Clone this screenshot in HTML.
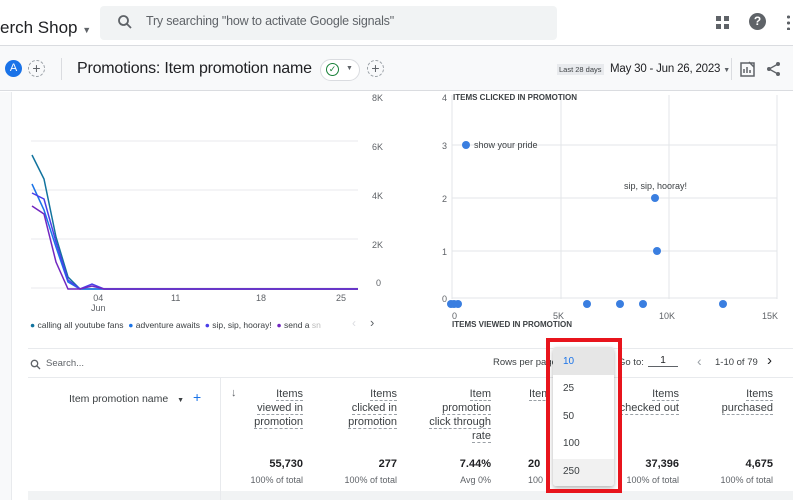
<!DOCTYPE html>
<html><head><meta charset="utf-8"><style>
*{box-sizing:border-box;margin:0;padding:0}
body{width:793px;height:500px;overflow:hidden;background:#fff;font-family:"Liberation Sans",Arial,sans-serif;color:#202124;position:relative}
.a{position:absolute;white-space:nowrap}
.hd{font-size:11px;color:#3c4043;line-height:14px;text-align:right}
.hd span{border-bottom:1px dashed #9aa0a6}
.n{font-size:11px;font-weight:bold;color:#202124}
.s{font-size:9px;color:#5f6368}
.yl{font-size:9px;color:#5f6368}
</style></head><body>
<div class="a" style="left:0;top:0;width:793px;height:46px;border-bottom:1px solid #dadce0;background:#fff"></div>
<div class="a" style="left:0;top:18px;font-size:17px;color:#202124">erch Shop <span style="font-size:9px;color:#5f6368">▼</span></div>
<div class="a" style="left:100px;top:6px;width:457px;height:34px;background:#f1f3f4;border-radius:4px"></div>
<svg class="a" style="left:117px;top:14px" width="16" height="16" viewBox="0 0 16 16"><circle cx="6.5" cy="6.5" r="4.5" fill="none" stroke="#5f6368" stroke-width="1.8"/><path d="M10 10l4 4" stroke="#5f6368" stroke-width="1.8"/></svg>
<div class="a" style="left:146px;top:14px;font-size:12.5px;color:#5f6368;letter-spacing:-0.2px">Try searching "how to activate Google signals"</div>
<svg class="a" style="left:716px;top:16px" width="14" height="14"><rect x="0" y="0" width="5" height="5" fill="#5f6368"/><rect x="8" y="0" width="5" height="5" fill="#5f6368"/><rect x="0" y="8" width="5" height="5" fill="#5f6368"/><rect x="8" y="8" width="5" height="5" fill="#5f6368"/></svg>
<div class="a" style="left:749px;top:13px;width:17px;height:17px;border-radius:50%;background:#5f6368;color:#fff;font-size:12px;font-weight:bold;text-align:center;line-height:17px">?</div>
<div class="a" style="left:787px;top:14px;width:3px;height:16px;background:radial-gradient(circle,#5f6368 1.5px,transparent 1.6px) 0 0/3px 6px"></div>
<div class="a" style="left:0;top:46px;width:793px;height:45px;background:#f8f9fa;border-bottom:1px solid #dadce0"></div>
<div class="a" style="left:5px;top:60px;width:17px;height:17px;border-radius:50%;background:#1a73e8;color:#fff;font-size:11px;text-align:center;line-height:17px">A</div>
<div class="a" style="left:28px;top:60px;width:17px;height:17px;border-radius:50%;border:1px dashed #9aa0a6;color:#5f6368;font-size:14px;text-align:center;line-height:14px">+</div>
<div class="a" style="left:61px;top:58px;width:1px;height:22px;background:#dadce0"></div>
<div class="a" style="left:77px;top:60px;font-size:16px;color:#202124;letter-spacing:-0.2px">Promotions: Item promotion name</div>
<div class="a" style="left:320px;top:59px;width:40px;height:22px;border:1px solid #dadce0;border-radius:11px;background:#fff"></div>
<div class="a" style="left:326px;top:63px;width:13px;height:13px;border-radius:50%;border:1.5px solid #188038;color:#188038;font-size:9px;text-align:center;line-height:11px">✓</div>
<div class="a" style="left:346px;top:65px;font-size:7px;color:#5f6368">▼</div>
<div class="a" style="left:367px;top:60px;width:17px;height:17px;border-radius:50%;border:1px dashed #9aa0a6;color:#5f6368;font-size:14px;text-align:center;line-height:14px">+</div>
<div class="a" style="left:557px;top:64px;font-size:7.5px;color:#3c4043;background:#e8eaed;padding:1px 2px">Last 28 days</div>
<div class="a" style="left:610px;top:63px;font-size:11.5px;color:#202124;letter-spacing:-0.2px">May 30 - Jun 26, 2023 <span style="font-size:7px;color:#5f6368">▼</span></div>
<div class="a" style="left:731px;top:58px;width:1px;height:22px;background:#dadce0"></div>
<svg class="a" style="left:740px;top:61px" width="16" height="16"><rect x="1" y="2" width="13" height="13" fill="none" stroke="#5f6368" stroke-width="1.5"/><path d="M4 12V8M7 12V6M10 12V9M9 1l5 5" stroke="#5f6368" stroke-width="1.5"/></svg>
<svg class="a" style="left:766px;top:61px" width="16" height="16"><circle cx="12" cy="3" r="2" fill="#5f6368"/><circle cx="3" cy="8" r="2" fill="#5f6368"/><circle cx="12" cy="13" r="2" fill="#5f6368"/><path d="M12 3L3 8l9 5" stroke="#5f6368" stroke-width="1.3" fill="none"/></svg>
<div class="a" style="left:0;top:92px;width:12px;height:408px;background:#f8f9fa;border-right:1px solid #e8eaed"></div>
<svg class="a" style="left:0;top:92px" width="400" height="250">
<g stroke="#e8eaed" stroke-width="1"><line x1="31" y1="49" x2="358" y2="49"/><line x1="31" y1="98" x2="358" y2="98"/><line x1="31" y1="147" x2="358" y2="147"/><line x1="31" y1="196" x2="358" y2="196"/></g>
<g fill="none" stroke-width="1.5">
<polyline stroke="#12739e" points="32,63 44,87 56,145 68,185 80,197 358,197"/>
<polyline stroke="#1a73e8" points="32,92 44,118 56,155 68,190 80,197 358,197"/>
<polyline stroke="#4a3ee8" points="32,101 44,107 56,150 68,188 80,197 92,192 104,197 358,197"/>
<polyline stroke="#7227c0" points="32,114 44,122 56,170 68,197 80,197 92,194 104,197 358,197"/>
</g></svg>
<div class="a yl" style="left:372px;top:93px">8K</div>
<div class="a yl" style="left:372px;top:142px">6K</div>
<div class="a yl" style="left:372px;top:191px">4K</div>
<div class="a yl" style="left:372px;top:240px">2K</div>
<div class="a yl" style="left:376px;top:278px">0</div>
<div class="a yl" style="left:91px;top:293px;text-align:center;line-height:10px">04<br>Jun</div>
<div class="a yl" style="left:171px;top:293px">11</div>
<div class="a yl" style="left:256px;top:293px">18</div>
<div class="a yl" style="left:336px;top:293px">25</div>
<div class="a" style="left:30px;top:320px;font-size:8.5px;color:#3c4043">
<span style="color:#12739e">●</span> calling all youtube fans &nbsp;<span style="color:#1a73e8">●</span> adventure awaits &nbsp;<span style="color:#4a3ee8">●</span> sip, sip, hooray! &nbsp;<span style="color:#7227c0">●</span> send a <span style="color:#bbb">sn</span></div>
<div class="a" style="left:352px;top:316px;font-size:12px;color:#dadce0">‹</div>
<div class="a" style="left:370px;top:315px;font-size:13px;color:#5f6368">›</div>
<svg class="a" style="left:400px;top:92px" width="393" height="250">
<g stroke="#e3e5e8"><line x1="52" y1="53" x2="377" y2="53"/><line x1="52" y1="106" x2="377" y2="106"/><line x1="52" y1="159" x2="377" y2="159"/><line x1="52" y1="206" x2="377" y2="206"/><line x1="52" y1="3" x2="52" y2="207"/><line x1="161" y1="3" x2="161" y2="207"/><line x1="269" y1="3" x2="269" y2="207"/><line x1="377" y1="3" x2="377" y2="207"/></g>
<g fill="#3a7ee0"><circle cx="66" cy="53" r="4"/><circle cx="255" cy="106" r="4"/><circle cx="257" cy="159" r="4"/><circle cx="51" cy="212" r="4"/><circle cx="54" cy="212" r="4"/><circle cx="58" cy="212" r="4"/><circle cx="187" cy="212" r="4"/><circle cx="220" cy="212" r="4"/><circle cx="243" cy="212" r="4"/><circle cx="323" cy="212" r="4"/></g>
</svg>
<div class="a" style="left:453px;top:93px;font-size:8px;font-weight:bold;color:#3c4043">ITEMS CLICKED IN PROMOTION</div>
<div class="a yl" style="left:442px;top:93px">4</div>
<div class="a yl" style="left:442px;top:141px">3</div>
<div class="a yl" style="left:442px;top:194px">2</div>
<div class="a yl" style="left:442px;top:247px">1</div>
<div class="a yl" style="left:442px;top:294px">0</div>
<div class="a" style="left:474px;top:140px;font-size:9px;color:#3c4043">show your pride</div>
<div class="a" style="left:624px;top:181px;font-size:9px;color:#3c4043">sip, sip, hooray!</div>
<div class="a yl" style="left:452px;top:311px">0</div>
<div class="a yl" style="left:553px;top:311px">5K</div>
<div class="a yl" style="left:659px;top:311px">10K</div>
<div class="a yl" style="left:762px;top:311px">15K</div>
<div class="a" style="left:452px;top:320px;font-size:8px;font-weight:bold;color:#3c4043">ITEMS VIEWED IN PROMOTION</div>
<div class="a" style="left:28px;top:348px;width:765px;height:1px;background:#e8eaed"></div>
<div class="a" style="left:28px;top:377px;width:765px;height:1px;background:#e8eaed"></div>
<svg class="a" style="left:30px;top:359px" width="11" height="11"><circle cx="4.5" cy="4.5" r="3.2" fill="none" stroke="#5f6368" stroke-width="1.3"/><path d="M7 7l3 3" stroke="#5f6368" stroke-width="1.3"/></svg>
<div class="a" style="left:46px;top:358px;font-size:9.5px;color:#5f6368">Search...</div>
<div class="a" style="left:493px;top:357px;font-size:9.5px;color:#3c4043">Rows per page</div>
<div class="a" style="left:618px;top:357px;font-size:9.5px;color:#3c4043">Go to:</div>
<div class="a" style="left:648px;top:355px;width:30px;border-bottom:1px solid #5f6368;font-size:10px;text-align:center">1</div>
<div class="a" style="left:697px;top:353px;font-size:14px;color:#9aa0a6">‹</div>
<div class="a" style="left:715px;top:357px;font-size:9.5px;color:#3c4043">1-10 of 79</div>
<div class="a" style="left:767px;top:352px;font-size:15px;color:#202124">›</div>
<div class="a" style="left:220px;top:378px;width:1px;height:122px;background:#e8eaed"></div>
<div class="a" style="left:69px;top:389px;font-size:10.5px;color:#3c4043">Item promotion name <span style="font-size:7px;margin-left:6px">▼</span> <span style="color:#1a73e8;font-size:14px;margin-left:6px">+</span></div>
<div class="a" style="left:231px;top:387px;font-size:11px;color:#5f6368">↓</div>
<div class="a hd" style="right:490px;top:387px"><span>Items</span><br><span>viewed in</span><br><span>promotion</span></div>
<div class="a hd" style="right:396px;top:387px"><span>Items</span><br><span>clicked in</span><br><span>promotion</span></div>
<div class="a hd" style="right:302px;top:387px"><span>Item</span><br><span>promotion</span><br><span>click through</span><br><span>rate</span></div>
<div class="a hd" style="left:529px;top:387px"><span>Item</span></div>
<div class="a hd" style="right:114px;top:387px"><span>Items</span><br><span>checked out</span></div>
<div class="a hd" style="right:20px;top:387px"><span>Items</span><br><span>purchased</span></div>
<div class="a n" style="right:490px;top:458px">55,730</div><div class="a s" style="right:490px;top:475px">100% of total</div>
<div class="a n" style="right:396px;top:458px">277</div><div class="a s" style="right:396px;top:475px">100% of total</div>
<div class="a n" style="right:302px;top:458px">7.44%</div><div class="a s" style="right:302px;top:475px">Avg 0%</div>
<div class="a n" style="left:528px;top:458px">20</div><div class="a s" style="left:528px;top:475px">100</div>
<div class="a n" style="right:114px;top:458px">37,396</div><div class="a s" style="right:114px;top:475px">100% of total</div>
<div class="a n" style="right:20px;top:458px">4,675</div><div class="a s" style="right:20px;top:475px">100% of total</div>
<div class="a" style="left:28px;top:491px;width:765px;height:9px;background:#f1f3f4"></div>
<div class="a" style="left:220px;top:491px;width:1px;height:9px;background:#e8eaed"></div>
<div class="a" style="left:553px;top:347px;width:61px;height:139px;background:#fff;box-shadow:0 2px 5px rgba(0,0,0,.3);border-radius:3px;overflow:hidden;font-size:10px;color:#3c4043">
<div style="height:28px;background:#e6e6e6;color:#1a73e8;padding:9px 0 0 10px">10</div>
<div style="height:28px;padding:8px 0 0 10px">25</div>
<div style="height:28px;padding:8px 0 0 10px">50</div>
<div style="height:28px;padding:7px 0 0 10px">100</div>
<div style="height:27px;background:#f1f1f1;padding:7px 0 0 10px">250</div>
</div>
<div class="a" style="left:546px;top:338px;width:76px;height:155px;border:4px solid #e8141c"></div>
</body></html>
